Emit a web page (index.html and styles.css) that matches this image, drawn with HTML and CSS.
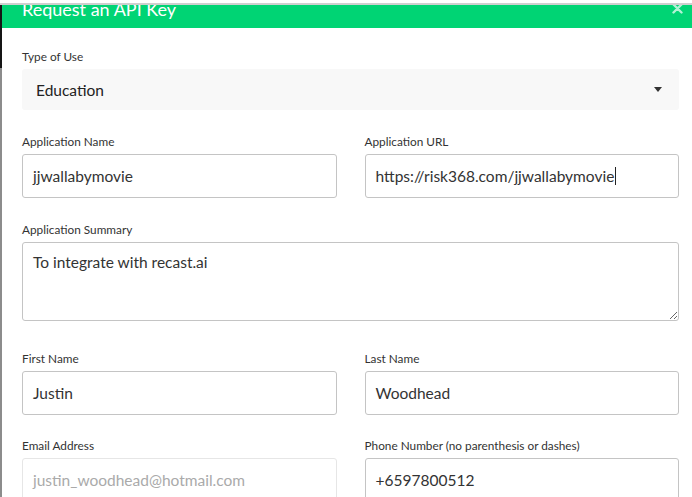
FILE: index.html
```html
<!DOCTYPE html>
<html>
<head>
<meta charset="utf-8">
<link rel="stylesheet" href="styles.css">
</head>
<body>
<div class="topbar"></div>
<div class="frame">
  <div class="edge"></div>
  <div class="modal">
    <div class="modal-head">
      <h1 class="title">Request an API Key</h1>
      <svg class="close" width="11" height="11" viewBox="0 0 11 11"><path d="M1.5 1.5 L9.5 9.5 M9.5 1.5 L1.5 9.5" stroke="#fff" stroke-width="2.4" stroke-linecap="round"/></svg>
    </div>
    <div class="modal-body">
      <div class="group">
        <label class="label">Type of Use</label>
        <div class="select">
          <span>Education</span>
          <svg class="caret-down" width="8" height="5" viewBox="0 0 8 5"><path d="M0 0 H8 L4 5 Z" fill="#333"/></svg>
        </div>
      </div>
      <div class="row">
        <div class="group">
          <label class="label">Application Name</label>
          <div class="input">jjwallabymovie</div>
        </div>
        <div class="group">
          <label class="label">Application URL</label>
          <div class="input">https://risk368.com/jjwallabymovie<span class="cursor"></span></div>
        </div>
      </div>
      <div class="group group-summary">
        <label class="label">Application Summary</label>
        <textarea class="textarea" readonly>To integrate with recast.ai</textarea>
      </div>
      <div class="row">
        <div class="group group-name">
          <label class="label">First Name</label>
          <div class="input">Justin</div>
        </div>
        <div class="group group-name">
          <label class="label">Last Name</label>
          <div class="input">Woodhead</div>
        </div>
      </div>
      <div class="row">
        <div class="group">
          <label class="label">Email Address</label>
          <div class="input input-disabled">justin_woodhead@hotmail.com</div>
        </div>
        <div class="group">
          <label class="label">Phone Number (no parenthesis or dashes)</label>
          <div class="input">+6597800512</div>
        </div>
      </div>
    </div>
  </div>
</div>
</body>
</html>
```
FILE: styles.css
```css
html, body {
  margin: 0;
  padding: 0;
  background: #fff;
  overflow: hidden;
}
body {
  width: 692px;
  height: 497px;
  font-family: Lato, "Open Sans", sans-serif;
  color: #333;
}
.topbar {
  height: 3px;
  border-bottom: 2px solid #cfcfcf;
  background: #fff;
}
.frame {
  display: flex;
  height: 492px;
}
.edge {
  width: 2px;
  flex: none;
  background: linear-gradient(#151515 0 63px, #8c8c8c 63px);
}
.modal {
  flex: 1;
  background: #fff;
}
.modal-head {
  position: relative;
  height: 23px;
  background: #00d474;
  overflow: hidden;
  padding-left: 20px;
}
.title {
  margin: -5px 0 0;
  font-size: 18px;
  line-height: 18px;
  font-weight: 400;
  color: #fff;
}
.close {
  position: absolute;
  right: 9px;
  top: -2px;
  opacity: 0.7;
}
.modal-body {
  padding: 21px 13px 0 20px;
}
.row {
  display: flex;
  gap: 28px;
}
.row .group {
  flex: 1;
}
.group {
  margin-bottom: 24px;
}
.group-summary {
  margin-bottom: 30px;
}
.group-name {
  margin-bottom: 23px;
}
.label {
  display: block;
  font-size: 11.8px;
  line-height: 16px;
  margin-bottom: 4px;
  color: #333;
}
.select {
  height: 41px;
  box-sizing: border-box;
  background: #f8f8f8;
  border-radius: 3px;
  display: flex;
  align-items: center;
  justify-content: space-between;
  padding: 0 17px 0 14px;
  font-size: 15.5px;
  color: #222;
}
.input {
  height: 44px;
  box-sizing: border-box;
  border: 1px solid #c4c4c4;
  border-radius: 3px;
  padding: 0 10px;
  display: flex;
  align-items: center;
  font-size: 15.5px;
  color: #333;
  white-space: nowrap;
}
.input-disabled {
  border-color: #e6e6e6;
  color: #aaa;
}
.cursor {
  display: inline-block;
  width: 1px;
  height: 18px;
  background: #222;
  margin-left: 1px;
}
.textarea {
  display: block;
  width: 100%;
  height: 79px;
  box-sizing: border-box;
  border: 1px solid #c4c4c4;
  border-radius: 3px;
  padding: 10px 10px;
  font-family: Lato, "Open Sans", sans-serif;
  font-size: 15.5px;
  color: #333;
  margin: 0;
  outline: none;
}
```
